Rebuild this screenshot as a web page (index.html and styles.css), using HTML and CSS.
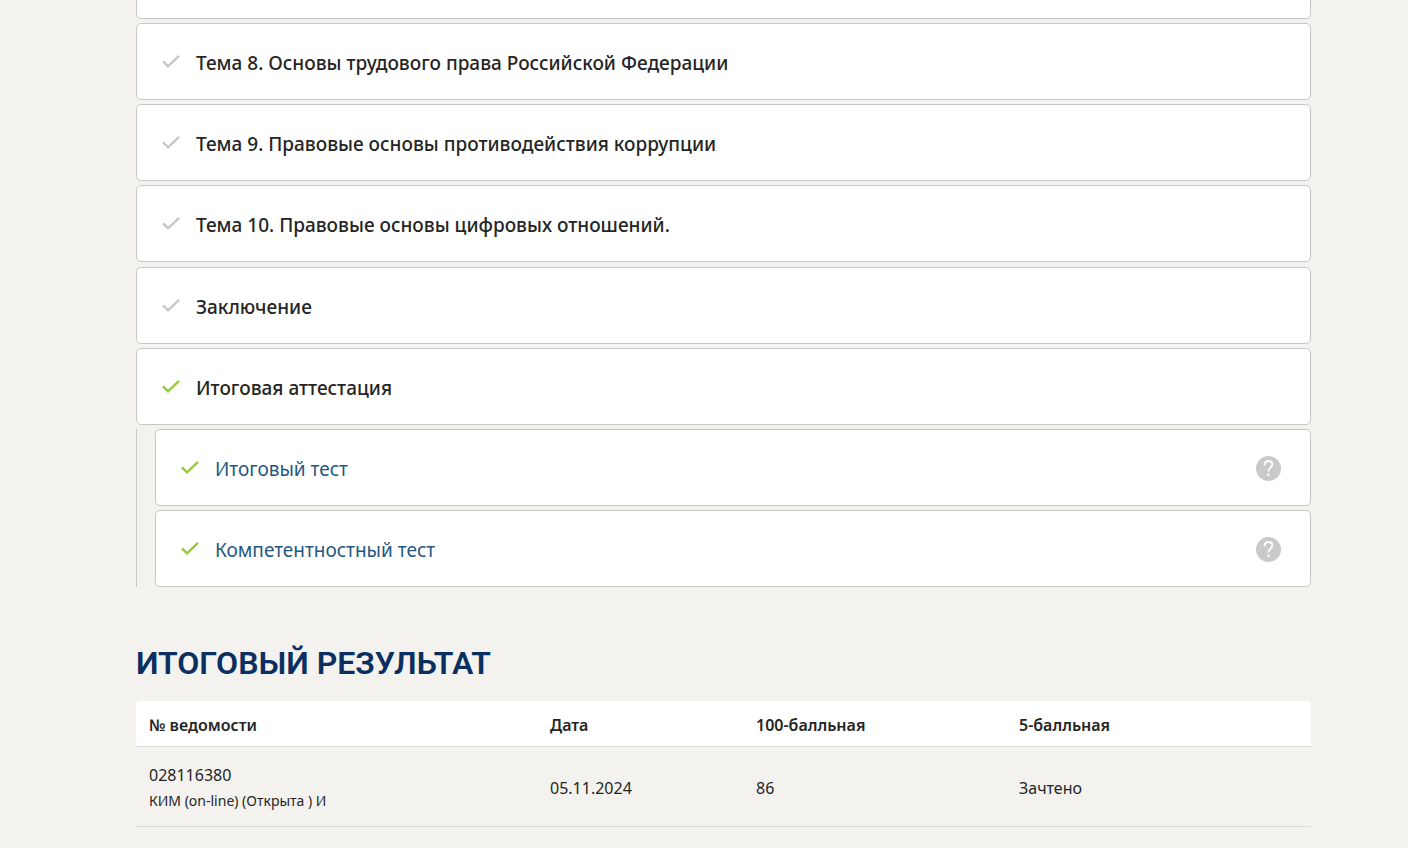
FILE: index.html
```html
<!DOCTYPE html>
<html lang="ru">
<head>
	<meta charset="utf-8">
	<title>Итоговый результат</title>
	<link rel="stylesheet" href="styles.css">
</head>
<body>
	<svg class="sprite" aria-hidden="true">
		<symbol id="check" viewBox="0 0 18 14">
			<path d="M1 6.4L6 11.4L17 .9" fill="none" stroke="currentColor" stroke-width="2.4"/>
		</symbol>
		<symbol id="help" viewBox="0 0 26 26">
			<circle cx="13" cy="13" r="13" fill="#c9c9c9"/>
			<path d="M9 9.5C9 6.7 10.6 5.2 13 5.2C15.4 5.2 17 6.7 17 8.9C17 12 13 12.3 13 16" fill="none" stroke="#fff" stroke-width="2"/>
			<circle cx="13" cy="19.6" r="1.3" fill="#fff"/>
		</symbol>
	</svg>

	<main class="page">
		<ul class="topics">
			<li class="card"></li>
			<li class="card"><svg class="check"><use href="#check"/></svg><span class="title">Тема 8. Основы трудового права Российской Федерации</span></li>
			<li class="card"><svg class="check"><use href="#check"/></svg><span class="title">Тема 9. Правовые основы противодействия коррупции</span></li>
			<li class="card"><svg class="check"><use href="#check"/></svg><span class="title">Тема 10. Правовые основы цифровых отношений.</span></li>
		</ul>
		<ul class="topics final">
			<li class="card"><svg class="check"><use href="#check"/></svg><span class="title">Заключение</span></li>
			<li class="card"><svg class="check done"><use href="#check"/></svg><span class="title">Итоговая аттестация</span></li>
		</ul>
		<ul class="topics tests">
			<li class="card">
				<svg class="check done"><use href="#check"/></svg>
				<a class="link" href="#">Итоговый тест</a>
				<button class="help" type="button" aria-label="Справка"><svg><use href="#help"/></svg></button>
			</li>
			<li class="card">
				<svg class="check done"><use href="#check"/></svg>
				<a class="link" href="#">Компетентностный тест</a>
				<button class="help" type="button" aria-label="Справка"><svg><use href="#help"/></svg></button>
			</li>
		</ul>

		<h2 class="heading">Итоговый результат</h2>

		<table class="result">
			<thead>
				<tr>
					<th class="col-num">№ ведомости</th>
					<th class="col-date">Дата</th>
					<th class="col-score">100-балльная</th>
					<th>5-балльная</th>
				</tr>
			</thead>
			<tbody>
				<tr>
					<td>028116380<div class="note">КИМ (on-line) (Открыта ) И</div></td>
					<td>05.11.2024</td>
					<td>86</td>
					<td>Зачтено</td>
				</tr>
			</tbody>
		</table>
	</main>
</body>
</html>
```
FILE: styles.css
```css
*{
	box-sizing: border-box;
}

body{
	margin: 0;
	background-color: #f3f2ee;
	color: #252525;
	font-family: "Noto Sans", "Open Sans", sans-serif;
	font-size: 16px;
}

.sprite{
	display: none;
}

.page{
	display: flow-root;
	padding: 0 97px 0 136px;
}

.topics{
	display: flex;
	flex-direction: column;
	gap: 4px;
	margin: -58px 0 0;
	padding: 0;
	list-style: none;
}

.final{
	margin-top: 5px;
}

.tests{
	margin-top: 4px;
	padding-left: 18px;
	border-left: 1px solid #c8c8c8;
}

.card{
	display: flex;
	align-items: center;
	min-height: 77px;
	padding: 2px 29px 0 25px;
	background-color: #fff;
	border: 1px solid #c8c8c8;
	border-radius: 5px;
}

.check{
	flex: none;
	width: 18px;
	height: 14px;
	margin: 0 16px 2px 0;
	color: #c8c8c8;
}

.done{
	color: #97c93d;
}

.title{
	font-size: 19px;
	font-weight: 500;
}

.link{
	color: #24587f;
	font-size: 19px;
	text-decoration: none;
}

.help{
	width: 25px;
	height: 25px;
	margin-left: auto;
	padding: 0;
	border: 0;
	background: none;
	cursor: pointer;
}

.help svg{
	display: block;
	width: 25px;
	height: 25px;
}

.heading{
	margin: 54px 0 16px;
	color: #0a2f60;
	font-family: Roboto, "Noto Sans", sans-serif;
	font-size: 32px;
	font-weight: 600;
	line-height: 44px;
	text-transform: uppercase;
}

.result{
	width: 100%;
	border-collapse: separate;
	border-spacing: 0;
	table-layout: fixed;
}

.result th,
.result td{
	padding: 11px 13px 8px;
	border-bottom: 1px solid #dadada;
	line-height: 26px;
	text-align: left;
}

.result th{
	background-color: #fff;
	font-weight: 600;
}

.result th:first-child{
	border-top-left-radius: 4px;
}

.result th:last-child{
	border-top-right-radius: 4px;
}

.result td{
	padding: 15px 13px 12px;
}

.col-num{
	width: 401px;
}

.col-date{
	width: 206px;
}

.col-score{
	width: 263px;
}

.note{
	font-size: 14px;
}
```
